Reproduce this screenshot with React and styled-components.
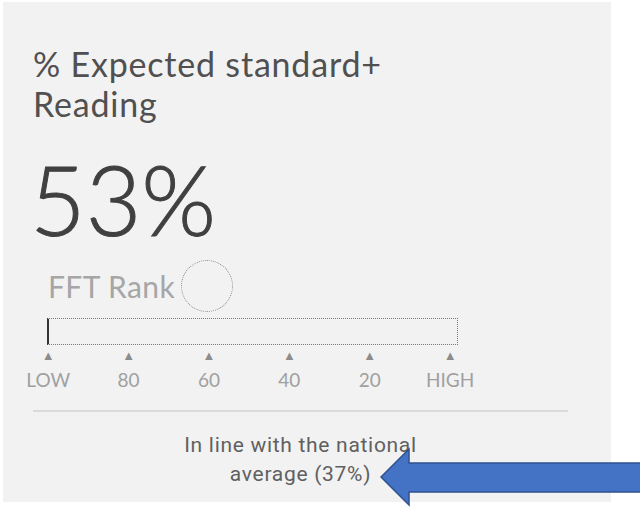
import React from 'react';
import styled, { createGlobalStyle } from 'styled-components';

const Global = createGlobalStyle`
  body {
    margin: 0;
    background: #ffffff;
  }
`

const Page = styled.div`
  position: relative;
  width: 640px;
  height: 507px;
  overflow: hidden;
`

const Panel = styled.div`
  margin: 2px 0 0 3px;
  width: 608px;
  height: 500px;
  box-sizing: border-box;
  background: #f2f2f2;
  padding: 42px 44px 0 30px;
  display: flex;
  flex-direction: column;
`

const Title = styled.h2`
  margin: 0;
  font-family: "Lato", sans-serif;
  font-weight: 400;
  font-size: 34px;
  letter-spacing: 0.8px;
  line-height: 40px;
  color: #505050;
`

const BigValue = styled.div`
  margin: 29px 0 0 -3px;
  font-family: "Lato", sans-serif;
  font-weight: 300;
  font-size: 96px;
  line-height: 92px;
  color: #404040;
  -webkit-text-stroke: 1px #404040;
`

const RankRow = styled.div`
  display: flex;
  align-items: center;
  gap: 6px;
  margin: 15px 0 0 15px;
`

const RankLabel = styled.span`
  font-family: "Lato", sans-serif;
  font-size: 30px;
  letter-spacing: 0.4px;
  color: #a6a6a6;
`

const RankCircle = styled.div`
  width: 50px;
  height: 50px;
  border-radius: 50%;
  border: 1px dotted #8c8c8c;
`

const Scale = styled.div`
  margin: 6px 0 0 0;
  display: flex;
  flex-direction: column;
`

const Bar = styled.div`
  margin-left: 14px;
  width: 408px;
  height: 25px;
  border: 1px dotted #7a7a7a;
  border-left: 2px solid #333333;
`

const Ticks = styled.div`
  display: grid;
  grid-template-columns: repeat(6, 80.4px);
  margin: 3px 0 0 -25px;
`

const Tick = styled.div`
  display: flex;
  flex-direction: column;
  align-items: center;
  font-family: "Lato", sans-serif;
  font-size: 19px;
  color: #a0a0a0;
`

const Arrowhead = styled.span`
  font-size: 13px;
  line-height: 15px;
  color: #8c8c8c;
  margin-bottom: 5px;
`

const Divider = styled.hr`
  margin: 19px 0 0 0;
  width: 535px;
  border: none;
  border-top: 2px solid #dadada;
`

const Summary = styled.p`
  margin: 19px 0 0 0;
  width: 535px;
  text-align: center;
  font-family: "Roboto", sans-serif;
  font-size: 21px;
  letter-spacing: 0.7px;
  line-height: 29px;
  color: #606060;
`

const Callout = styled.svg`
  position: absolute;
  left: 0;
  top: 0;
`

const ticks = ['LOW', '80', '60', '40', '20', 'HIGH']

const App = () => {
  return (
    <Page>
      <Global />
      <Panel>
        <Title>% Expected standard+<br />Reading</Title>
        <BigValue>53%</BigValue>
        <RankRow>
          <RankLabel>FFT Rank</RankLabel>
          <RankCircle />
        </RankRow>
        <Scale>
          <Bar />
          <Ticks>
            {ticks.map((t) => (
              <Tick key={t}>
                <Arrowhead>▲</Arrowhead>
                {t}
              </Tick>
            ))}
          </Ticks>
        </Scale>
        <Divider />
        <Summary>In line with the national<br />average (37%)</Summary>
      </Panel>
      <Callout width="640" height="507" viewBox="0 0 640 507">
        <path
          d="M381 477 L409 449 L409 463 L642 463 L642 492 L409 492 L409 505 Z"
          fill="#4472c4"
          stroke="#2f528f"
          strokeWidth="1.5"
        />
      </Callout>
    </Page>
  )
}

export default App
